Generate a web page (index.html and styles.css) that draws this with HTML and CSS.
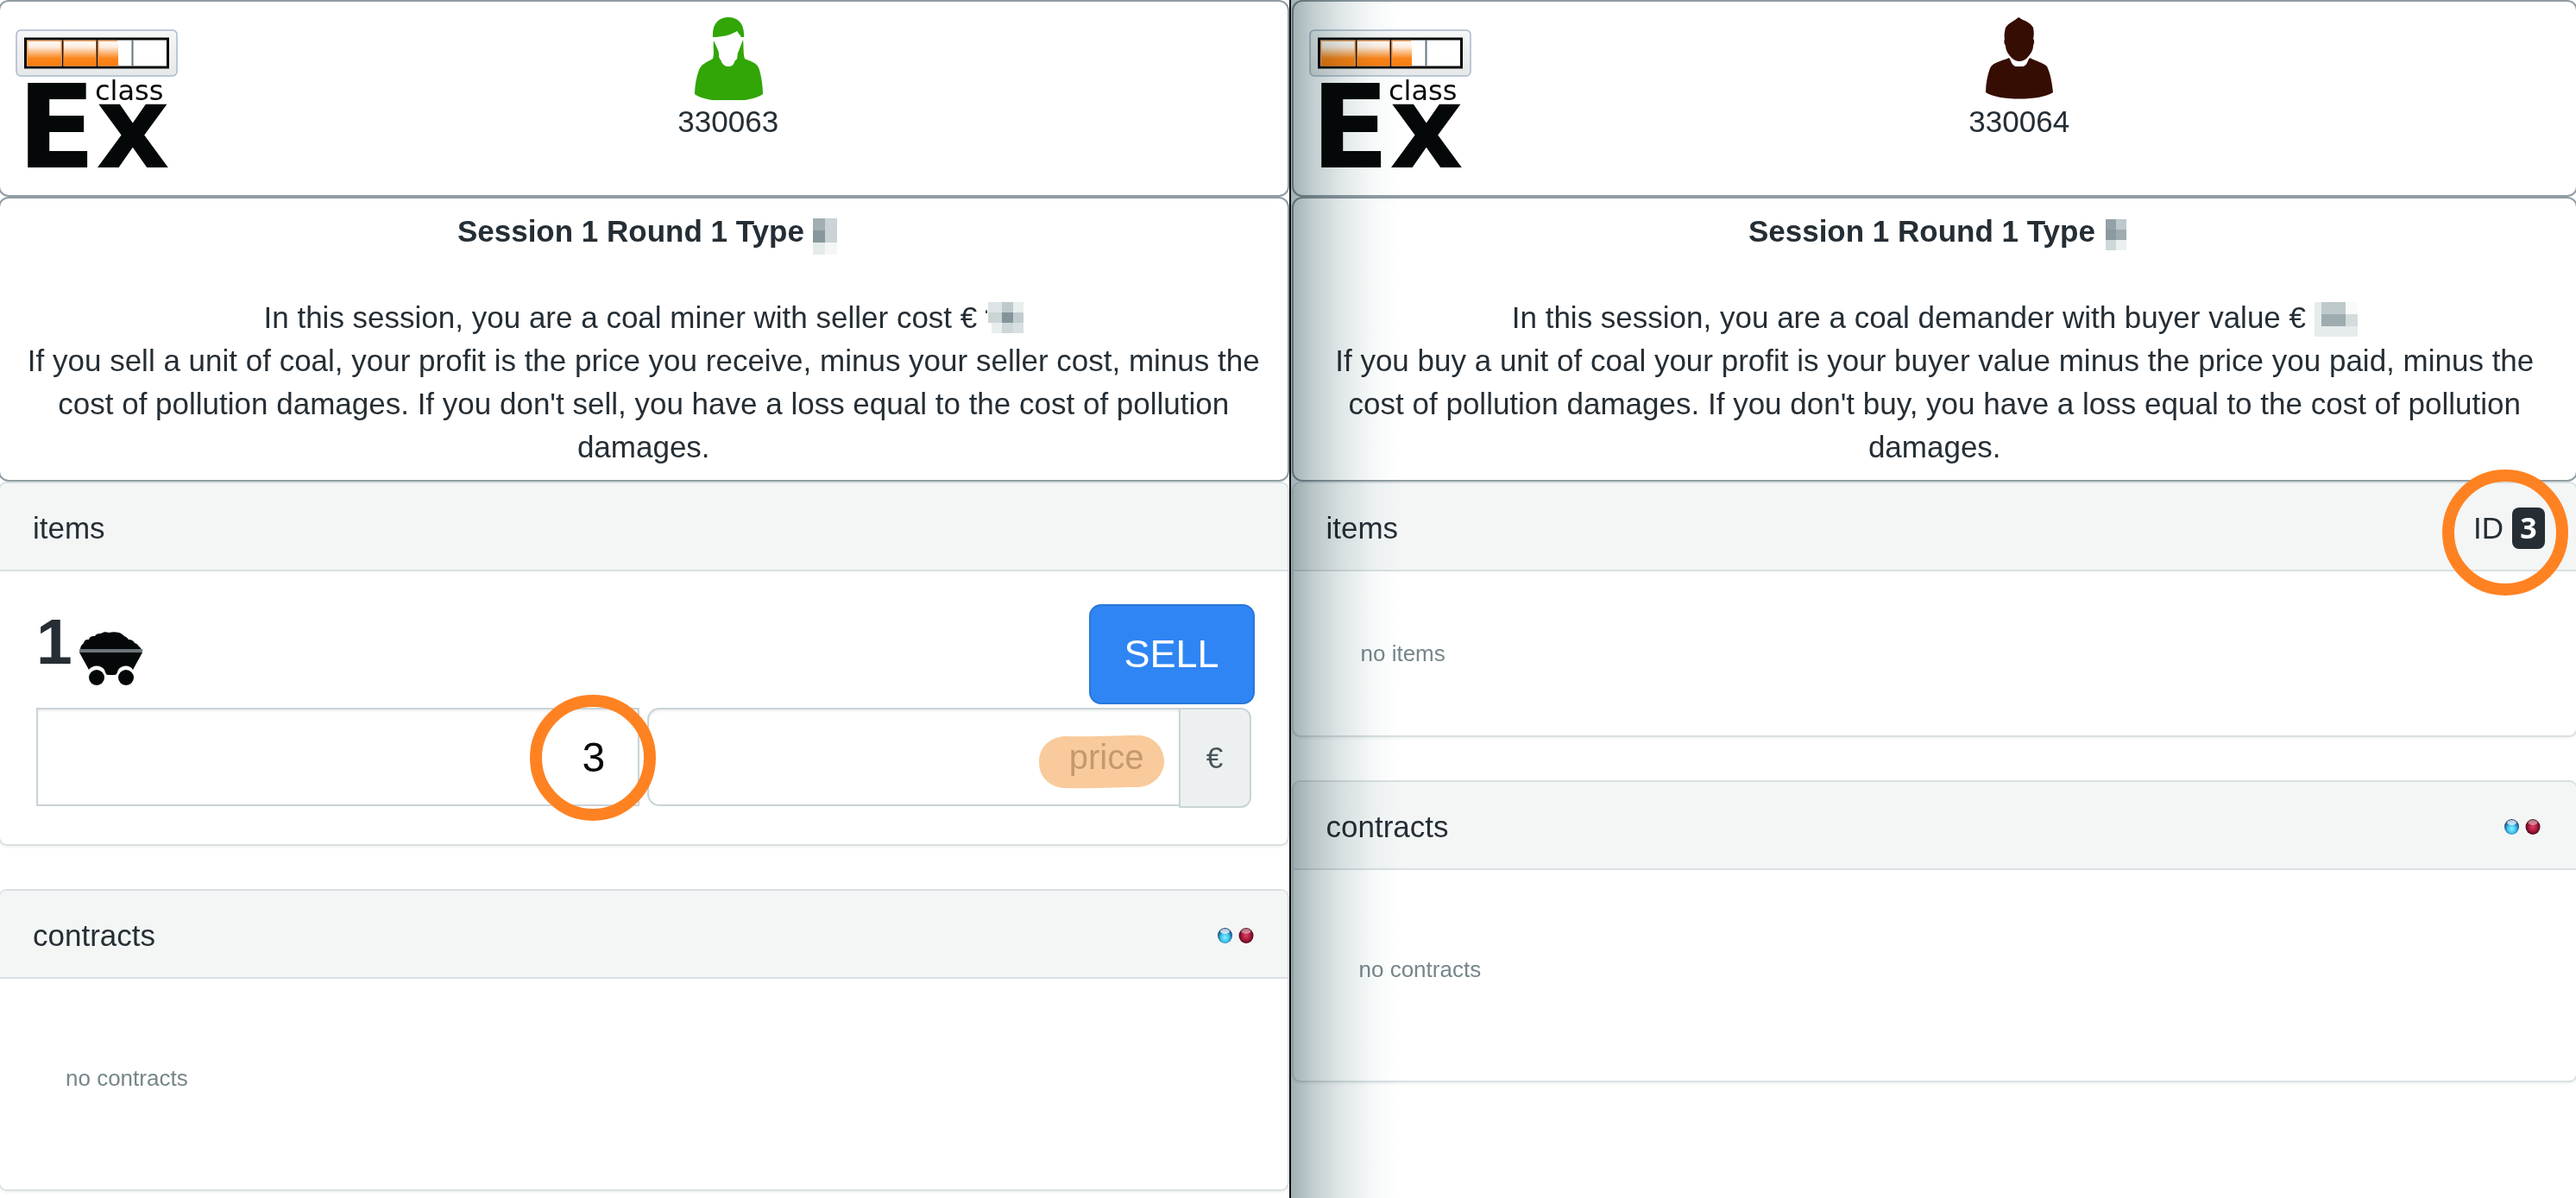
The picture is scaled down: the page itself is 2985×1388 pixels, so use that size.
FILE: index.html
```html
<!DOCTYPE html>
<html lang="en">
<head>
<meta charset="utf-8">
<title>classEx</title>
<link rel="stylesheet" href="styles.css">
</head>
<body>
<svg class="defs" width="0" height="0" aria-hidden="true">
  <defs>
    <linearGradient id="plate" x1="0" y1="0" x2="0" y2="1"><stop offset="0" stop-color="#f6f7f7"/><stop offset="1" stop-color="#e6e8e8"/></linearGradient>
    <linearGradient id="charge" x1="0" y1="0" x2="0" y2="1"><stop offset="0" stop-color="#fff"/><stop offset=".25" stop-color="#fdeadb"/><stop offset=".7" stop-color="#fb8519"/><stop offset="1" stop-color="#fb7d10"/></linearGradient>
    <radialGradient id="cyan" cx=".5" cy=".62" r=".55"><stop offset="0" stop-color="#7ff4fb"/><stop offset=".5" stop-color="#42c4f0"/><stop offset="1" stop-color="#163f70"/></radialGradient>
    <radialGradient id="red" cx=".5" cy=".5" r=".55"><stop offset="0" stop-color="#d9406a"/><stop offset=".5" stop-color="#b01a3e"/><stop offset="1" stop-color="#3c0412"/></radialGradient>
    <symbol id="logo" viewBox="0 0 190 164">
      <rect x="1" y="1" width="186" height="53" rx="5" fill="url(#plate)" stroke="#a9b9cc" stroke-width="1.5"/>
      <rect x="11.500" y="11" width="165" height="33" fill="#fff" stroke="#050a0c" stroke-width="3"/>
      <path d="M14 13.500h39v29h-39zM55 13.500h39v29H55zM95.500 13.500h23.500v29H95.500z" fill="url(#charge)"/>
      <path d="M13.800 42V13.300H53V42M55.500 42V13.300H93.500V42M96 42V13.300h22" fill="none" stroke="#fb8a2c" stroke-width="1"/>
      <path d="M54.500 12v31M94.500 12v31" stroke="#111" stroke-width="1.500"/>
      <path d="M135.500 12v31" stroke="#66777d" stroke-width="2"/>
      <text class="logo-ex" x="2" y="160">E<tspan x="93">x</tspan></text>
      <text class="logo-class" x="92" y="82">class</text>
    </symbol>
    <symbol id="dots" viewBox="0 0 44 20">
      <ellipse cx="9.500" cy="10" rx="8.500" ry="9" fill="url(#cyan)"/><ellipse cx="9.500" cy="5" rx="5.500" ry="3" fill="#fff" opacity=".7"/>
      <ellipse cx="34" cy="10" rx="8.500" ry="9" fill="url(#red)"/><ellipse cx="34" cy="5" rx="5.500" ry="3" fill="#fff" opacity=".45"/>
    </symbol>
  </defs>
</svg>

<main class="screens">
  <section class="screen seller">
    <header class="panel top">
      <svg class="logo" role="img" aria-label="classEx"><use href="#logo"/></svg>
      <div class="user">
        <svg class="avatar" viewBox="0 0 80 96" aria-hidden="true">
          <path fill="#31a606" d="M22 24C21 8 29 1 40 1s19 7 18 23h-3l-5-7c-8 5-18 7-28 7zM23 28l5 11c2 5 0 6 2 10 1 2 2 2 2 4 2 3 4 5 8 5s6-2 7-5c0-2 2-2 3-4 1-3 0-6 2-9l5-13c1 8 0 16 2 22 9 4 15 5 17 13 2 7 4 18 4 28-14 11-66 11-79 0 0-10 2-20 5-28 3-7 9-9 16-13 2-6 0-14 1-21z"/>
        </svg>
        <span>330063</span>
      </div>
    </header>
    <section class="panel info">
      <h1>Session 1 Round 1 Type <svg class="mosaic type" viewBox="0 0 28 42" width="28" height="42"><path fill="#a1aeb2" d="M0 0h14v14H0z"/><path fill="#cad4d6" d="M14 0h14v28H14z"/><path fill="#87979c" d="M0 14h14v14H0z"/><path fill="#e5eaea" d="M0 28h14v14H0z"/><path fill="#f5f7f7" d="M14 28h14v14H14z"/></svg></h1>
      <p>In this session, you are a coal miner with seller cost € <svg class="mosaic value" viewBox="0 0 44 36" width="44" height="36"><path fill="#3a454a" d="M0 10l2-1v4H0z"/><path fill="#dde4e5" d="M3 0h16v12H3z"/><path fill="#becacc" d="M19 0h13v12H19z"/><path fill="#e9eeee" d="M32 0h12v12H32z"/><path fill="#cbd4d5" d="M3 12h16v12H3z"/><path fill="#84959a" d="M19 12h13v12H19z"/><path fill="#c2cccf" d="M32 12h12v12H32z"/><path fill="#e8edee" d="M7 24h12v12H7z"/><path fill="#cdd7d8" d="M19 24h13v12H19z"/><path fill="#d8dfe0" d="M32 24h12v12H32z"/></svg><br>
      If you sell a unit of coal, your profit is the price you receive, minus your seller cost, minus the cost of pollution damages. If you don't sell, you have a loss equal to the cost of pollution damages.</p>
    </section>
    <section class="card">
      <div class="card-header"><h2>items</h2></div>
      <div class="card-body offer">
        <div class="offer-top">
          <div class="stock"><strong>1</strong>
            <svg class="cart" viewBox="0 0 74 62" aria-label="coal cart">
              <path fill="#050809" d="M1 22C1 16 3 15 5 13c1-4 3-4 6-4 1-4 4-4 7-4 2-3 4-3 7-3 3-2 6-2 9-1 4-1 8-1 12 0 3 1 4 2 6 4 2 1 4 2 5 4 4 0 6 2 7 4 3 1 4 2 5 4 2 1 3 3 3 5z"/>
              <path fill="#050809" d="M0 24h73L62 44C59 38 49 38 45 44c-1 3-2 6-4 6h-8c-2 0-3-3-4-6-4-6-14-6-18 0z"/>
              <path fill="#6c7579" d="M0 20h73v4H0z"/>
              <ellipse cx="20" cy="53" rx="9" ry="9" fill="#050809"/><ellipse cx="54" cy="53" rx="9" ry="9" fill="#050809"/>
            </svg>
          </div>
          <button class="sell" type="button">SELL</button>
        </div>
        <div class="fields">
          <div class="field ringed"><input class="buyer-id" type="text" value="3" aria-label="buyer ID"></div>
          <div class="field price-group">
            <div class="price-box">
              <input class="price" type="text" placeholder="price" aria-label="price">
              <svg class="marker" viewBox="0 0 145 62" aria-hidden="true"><path fill="#f5a758" fill-opacity=".6" d="M30 1c30 1 60-1 86-1 17 1 29 14 29 30s-13 29-30 30c-30 0-55 2-86 1C12 60 0 48 0 31S12 2 30 1z"/></svg>
            </div>
            <span class="unit">€</span>
          </div>
        </div>
      </div>
    </section>
    <section class="card">
      <div class="card-header"><h2>contracts</h2><svg class="dots" aria-hidden="true"><use href="#dots"/></svg></div>
      <div class="card-body empty tall">no contracts</div>
    </section>
  </section>

  <section class="screen buyer">
    <header class="panel top">
      <svg class="logo" role="img" aria-label="classEx"><use href="#logo"/></svg>
      <div class="user">
        <svg class="avatar" viewBox="0 0 80 96" aria-hidden="true">
          <path fill="#360d02" d="M39 1l5 3c5 2 9 4 12 9 1 5 1 9 0 13 2 2 1 5 0 8 0 6-4 11-8 15-5 4-11 4-16 0-4-4-8-9-8-15-2-3-2-6-1-8-1-4 0-9 1-13 4-6 9-7 15-12zM28 48c3 4 3 9 8 10h8c5-1 5-6 8-10 7 4 15 5 20 10 4 8 6 20 7 30-14 10-64 10-78 0 0-10 2-20 5-28 3-7 13-8 22-12z"/>
        </svg>
        <span>330064</span>
      </div>
    </header>
    <section class="panel info">
      <h1>Session 1 Round 1 Type <svg class="mosaic type" viewBox="0 0 28 42" width="28" height="42"><path fill="#93a2a6" d="M2 1h12v12H2z"/><path fill="#bdc9cc" d="M14 1h12v12H14z"/><path fill="#8b9a9f" d="M2 13h12v12H2z"/><path fill="#9eabb0" d="M14 13h12v12H14z"/><path fill="#ced8d9" d="M2 25h12v12H2z"/><path fill="#ecf0f0" d="M14 25h12v12H14z"/></svg></h1>
      <p>In this session, you are a coal demander with buyer value € <svg class="mosaic value low" viewBox="0 0 50 40" width="50" height="40"><path fill="#e6ebec" d="M0 0h8v40H0zM8 28h42v12H8z"/><path fill="#bdc9cb" d="M8 0h28v14H8z"/><path fill="#9eacb0" d="M8 14h28v14H8z"/><path fill="#d3dcdd" d="M36 14h14v14H36z"/><path fill="#f9fafa" d="M36 0h14v14H36z"/></svg><br>
      If you buy a unit of coal your profit is your buyer value minus the price you paid, minus the cost of pollution damages. If you don't buy, you have a loss equal to the cost of pollution damages.</p>
    </section>
    <section class="card">
      <div class="card-header"><h2>items</h2><div class="id ringed">ID <span class="badge">3</span></div></div>
      <div class="card-body empty">no items</div>
    </section>
    <section class="card">
      <div class="card-header"><h2>contracts</h2><svg class="dots" aria-hidden="true"><use href="#dots"/></svg></div>
      <div class="card-body empty tall">no contracts</div>
    </section>
  </section>
</main>
</body>
</html>
```
FILE: styles.css
```css
*, *::before, *::after { box-sizing: border-box; }

body {
  margin: 0;
  background: #fff;
  color: #252e35;
  font: 35px/50px "Liberation Sans", Arial, sans-serif;
}

h1, h2, p { margin: 0; font-size: inherit; }
h2 { font-weight: 400; }
svg { flex: none; }
.defs { position: absolute; }

.screens {
  display: grid;
  grid-template-columns: 1fr 1fr;
  min-height: 100vh;
  overflow: hidden;
}

.screen { min-width: 0; }
.seller { padding-right: 1px; margin-left: -2px; margin-right: -2px; }
.buyer {
  position: relative;
  margin-left: 1px;
  margin-right: -2px;
  border-left: 2px solid #050809;
  padding-left: 1px;
}

/* shade cast by the left screen */
.buyer::before {
  content: "";
  position: absolute;
  z-index: 1;
  inset: 0 auto 0 0;
  width: 130px;
  background: linear-gradient(90deg, #a1b0b4, #c3ced0 20%, #e0e7e8 45%, #f8fafa 75%, #fff);
  mix-blend-mode: multiply;
  pointer-events: none;
}

.panel {
  border: 2px solid #909da3;
  border-radius: 12px;
  background: #fff;
}

.top {
  display: grid;
  grid-template-columns: 196px 1fr;
  padding: 16px 0 28px;
}

.logo { width: 190px; height: 164px; margin: 16px 0 0 18px; }
.logo-ex { font: bold 133px "DejaVu Sans", sans-serif; fill: #050809; }
.logo-class { font: 32px "DejaVu Sans", sans-serif; fill: #050809; }

.user {
  display: flex;
  flex-direction: column;
  align-items: center;
}
.avatar { width: 80px; height: 98px; }

.info { padding: 13px 20px; text-align: center; }
.info h1 { margin-bottom: 50px; }
.mosaic { margin-bottom: -4px; }
.type { vertical-align: -11px; margin-right: -8px; }
.value { vertical-align: -2px; }
.low { vertical-align: -6px; }

.card {
  border: 2px solid #d9e0e3;
  border-radius: 10px;
  background: #fff;
  box-shadow: 0 2px 3px rgba(0, 0, 0, .05);
}
.card + .card { margin-top: 50px; }

.card-header {
  display: flex;
  align-items: center;
  justify-content: space-between;
  height: 102px;
  padding: 4px 38px 0;
  border-bottom: 2px solid #d9e0e3;
  border-radius: 8px 8px 0 0;
  background: #f4f6f6;
}
.dots { width: 44px; height: 20px; }
.buyer .dots { margin-right: 2px; }

.empty {
  padding: 76px 78px;
  color: #76868b;
  font-size: 26px;
  line-height: 38px;
}
.tall { padding: 96px 76px 110px; }

.offer { padding: 38px 38px 42px 42px; }
.offer-top {
  display: flex;
  align-items: flex-start;
  justify-content: space-between;
  height: 120px;
}
.stock { display: flex; align-items: flex-end; gap: 8px; }
.stock strong { font-size: 75px; line-height: 86px; }
.cart { width: 74px; height: 62px; margin-bottom: -8px; }

.sell {
  width: 192px;
  height: 116px;
  padding: 0;
  border: 2px solid #2a78d8;
  border-radius: 14px;
  background: #2f85f3;
  color: #fff;
  font: 45px/50px "Liberation Sans", Arial, sans-serif;
}

.fields { display: flex; gap: 9px; margin-right: 4px; }
.field { position: relative; flex: 1 1 0; min-width: 0; }
.fields input {
  display: block;
  width: 100%;
  height: 114px;
  padding: 0 38px;
  border: 2px solid #c9d4d7;
  border-radius: 0;
  outline: 0;
  background: #fff;
  box-shadow: inset 0 2px 3px rgba(0, 0, 0, .07);
  color: #050809;
  font: 48px/60px "Liberation Sans", Arial, sans-serif;
  text-align: right;
}
.price-group { display: flex; }
.price-box { position: relative; flex: 1; }
.fields .price {
  border-right: 0;
  border-radius: 14px 0 0 14px;
  padding-right: 40px;
  font-size: 40px;
}
.price::placeholder { color: #7a8689; opacity: 1; }
.marker {
  position: absolute;
  right: 17px;
  top: 32px;
  width: 145px;
  height: 62px;
  pointer-events: none;
}
.unit {
  display: grid;
  place-items: center;
  width: 84px;
  height: 116px;
  border: 2px solid #c9d4d7;
  border-radius: 0 12px 12px 0;
  background: #ecf0f1;
  color: #49545b;
}

/* orange call-out rings */
.ringed::after {
  content: "";
  position: absolute;
  z-index: 2;
  top: 50%;
  right: -19px;
  width: 146px;
  height: 146px;
  margin-top: -73px;
  border: 14px solid #ff8222;
  border-radius: 50%;
  pointer-events: none;
}
.id { position: relative; display: flex; align-items: center; gap: 10px; margin-right: -2px; }
.id::after { right: -27px; margin-top: -68px; }
.badge {
  width: 38px;
  height: 48px;
  border-radius: 8px;
  background: #252e35;
  color: #fff;
  font: bold 34px/46px "Noto Sans", sans-serif;
  text-align: center;
}
```
